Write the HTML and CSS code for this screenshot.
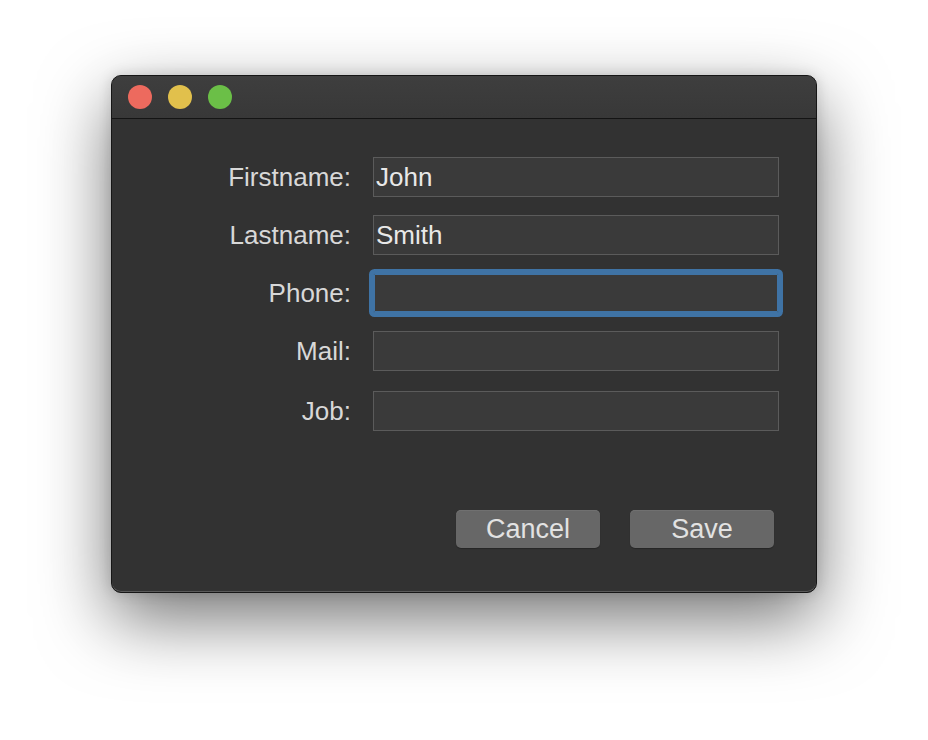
FILE: index.html
```html
<!DOCTYPE html>
<html lang="en">
<head>
    <meta charset="UTF-8">
    <title>Contact</title>
    <link rel="stylesheet" href="styles.css">
</head>
<body>
<div class="window">
    <div class="titlebar">
        <span class="light close"></span>
        <span class="light minimize"></span>
        <span class="light zoom"></span>
    </div>
    <div class="content">
        <form class="form">
            <label class="label" for="firstname">Firstname:</label>
            <input class="field" id="firstname" type="text" value="John">
            <label class="label" for="lastname">Lastname:</label>
            <input class="field" id="lastname" type="text" value="Smith">
            <label class="label" for="phone">Phone:</label>
            <input class="field focused" id="phone" type="text">
            <label class="label" for="mail">Mail:</label>
            <input class="field" id="mail" type="text">
            <label class="label last" for="job">Job:</label>
            <input class="field last" id="job" type="text">
        </form>
        <div class="buttons">
            <button class="button" type="button">Cancel</button>
            <button class="button" type="button">Save</button>
        </div>
    </div>
</div>
</body>
</html>
```

FILE: styles.css
```css
* {
    box-sizing: border-box;
}
body {
    margin: 0;
    padding-top: 75px;
    background-color: #fff;
    font-family: "Liberation Sans", Arial, sans-serif;
    min-height: 100vh;
}
.window {
    width: 706px;
    height: 518px;
    margin: 0 auto;
    background-color: #323232;
    border: 1px solid #161616;
    border-radius: 10px;
    box-shadow: 0 26px 70px rgba(0, 0, 0, 0.55), 0 0 14px rgba(0, 0, 0, 0.14), inset 0 -1px 0 #5a5a5a;
    overflow: hidden;
    display: flex;
    flex-direction: column;
}
.titlebar {
    height: 43px;
    flex-shrink: 0;
    background: linear-gradient(#3e3e3e, #383838);
    border-bottom: 1px solid #141414;
    display: flex;
    align-items: center;
    gap: 16px;
    padding: 0 0 1px 16px;
}
.light {
    width: 24px;
    height: 24px;
    border-radius: 50%;
}
.close {
    background-color: #ed6a5e;
}
.minimize {
    background-color: #e1c04c;
}
.zoom {
    background-color: #6bbf47;
}
.content {
    padding: 38px 37px 0 0;
}
.form {
    margin: 0;
    display: grid;
    grid-template-columns: 239px 406px;
    column-gap: 22px;
    row-gap: 18px;
    align-items: center;
}
.label {
    text-align: right;
    font-size: 26px;
    color: #d8d8d8;
}
.field {
    height: 40px;
    width: 100%;
    margin: 0;
    padding: 0 2px;
    background-color: #3a3a3a;
    border: 1px solid #5b5b5b;
    border-radius: 0;
    color: #e8e8e8;
    font-family: "Liberation Sans", Arial, sans-serif;
    font-size: 26px;
    outline: none;
}
.label.last,
.field.last {
    margin-top: 2px;
}
.field.focused {
    border-color: #3f73a5;
    border-radius: 2px;
    box-shadow: 0 0 0 4px #3f73a5, inset 0 0 0 1px #3f73a5;
}
.buttons {
    display: flex;
    justify-content: flex-end;
    gap: 30px;
    padding-right: 5px;
    margin-top: 79px;
}
.button {
    width: 144px;
    height: 38px;
    padding: 0;
    background-color: #676767;
    border: none;
    border-radius: 5px;
    box-shadow: inset 0 1px 0 #707070, 0 1px 1px rgba(0, 0, 0, 0.25);
    color: #e2e2e2;
    font-family: "Liberation Sans", Arial, sans-serif;
    font-size: 27px;
}
```
